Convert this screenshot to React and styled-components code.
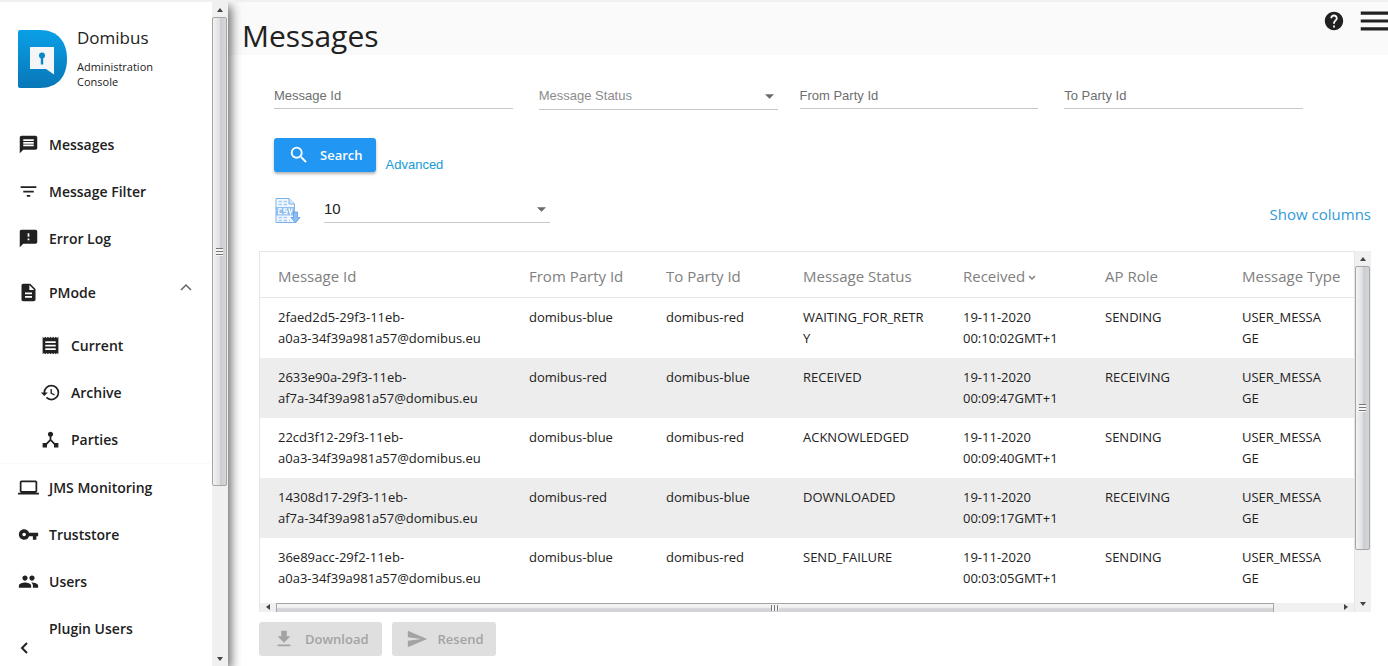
import React from "react";
import styled, { createGlobalStyle } from "styled-components";
import {
  MdComputer,
  MdDescription,
  MdDeviceHub,
  MdFeedback,
  MdFileDownload,
  MdFilterList,
  MdHelp,
  MdHistory,
  MdMenu,
  MdMessage,
  MdPeople,
  MdReceipt,
  MdSearch,
  MdSend,
  MdVpnKey,
} from "react-icons/md";

const mainLinks = [
  { label: "Messages", icon: MdMessage },
  { label: "Message Filter", icon: MdFilterList },
  { label: "Error Log", icon: MdFeedback },
];

const pmodeLinks = [
  { label: "Current", icon: MdReceipt },
  { label: "Archive", icon: MdHistory },
  { label: "Parties", icon: MdDeviceHub },
];

const adminLinks = [
  { label: "JMS Monitoring", icon: MdComputer },
  { label: "Truststore", icon: MdVpnKey },
  { label: "Users", icon: MdPeople },
  { label: "Plugin Users" },
];

const columns = [
  { title: "Message Id", width: 251 },
  { title: "From Party Id", width: 137 },
  { title: "To Party Id", width: 137 },
  { title: "Message Status", width: 160 },
  { title: "Received", width: 142, sorted: true },
  { title: "AP Role", width: 137 },
  { title: "Message Type", width: 130 },
];

const messages = [
  ["2faed2d5-29f3-11eb-a0a3-34f39a981a57@domibus.eu", "domibus-blue", "domibus-red", "WAITING_FOR_RETRY", "19-11-2020 00:10:02GMT+1", "SENDING", "USER_MESSAGE"],
  ["2633e90a-29f3-11eb-af7a-34f39a981a57@domibus.eu", "domibus-red", "domibus-blue", "RECEIVED", "19-11-2020 00:09:47GMT+1", "RECEIVING", "USER_MESSAGE"],
  ["22cd3f12-29f3-11eb-a0a3-34f39a981a57@domibus.eu", "domibus-blue", "domibus-red", "ACKNOWLEDGED", "19-11-2020 00:09:40GMT+1", "SENDING", "USER_MESSAGE"],
  ["14308d17-29f3-11eb-af7a-34f39a981a57@domibus.eu", "domibus-red", "domibus-blue", "DOWNLOADED", "19-11-2020 00:09:17GMT+1", "RECEIVING", "USER_MESSAGE"],
  ["36e89acc-29f2-11eb-a0a3-34f39a981a57@domibus.eu", "domibus-blue", "domibus-red", "SEND_FAILURE", "19-11-2020 00:03:05GMT+1", "SENDING", "USER_MESSAGE"],
];

const Logo = () => (
  <svg width="50" height="58" viewBox="0 0 50 58" aria-hidden="true">
    <defs>
      <linearGradient id="logoBlue" x1="0" y1="0" x2="0" y2="1">
        <stop offset="0" stopColor="#0a9fe6" />
        <stop offset="1" stopColor="#0877b8" />
      </linearGradient>
    </defs>
    <path
      d="M2 0H22C40 0 49 12 49 29S40 58 22 58H2Q0 58 0 56V2Q0 0 2 0Z"
      fill="url(#logoBlue)"
    />
    <path d="M12 17H36V44.500L28 39H12Z" fill="#f3f5f7" />
    <circle cx="24" cy="25.500" r="3" fill="#0b86c8" />
    <path d="M22.800 26H25.200V34.500H22.800Z" fill="#0b86c8" />
  </svg>
);

const CsvIcon = () => (
  <svg width="26" height="26" viewBox="0 0 26 26" fill="none" aria-hidden="true">
    <path d="M1 .5H14L19.500 6V24.500H1Z" fill="#f2f8ff" stroke="#7fb0e4" />
    <path d="M14 .5V6H19.500" fill="#d5e8fb" stroke="#7fb0e4" />
    <path
      d="M3.500 3.500H7M8.500 3.500H12M3.500 6.500H7M8.500 6.500H12M3.500 19.500H7M8.500 19.500H12M3.500 22.500H7M8.500 22.500H12M14 22.500H15"
      stroke="#a9cdf2"
      strokeWidth="1.500"
    />
    <rect x="1" y="9" width="18.500" height="8.500" fill="#8fbff0" />
    <path
      d="M7 10.800H3.800V15.700H7M12 10.800H9V13.200H12V15.700H8.800M13.800 10.300L15.500 15.700L17.200 10.300"
      stroke="#fff"
      strokeWidth="1.200"
    />
    <path
      d="M18.500 14H22.500V19.500H25L20.500 25L16 19.500H18.500Z"
      fill="#8cc0f5"
      stroke="#5c9be0"
      strokeWidth=".8"
    />
  </svg>
);

const Chevron = ({ points, width, height, stroke }) => (
  <svg
    width={width}
    height={height}
    viewBox={`0 0 ${width} ${height}`}
    fill="none"
    stroke="currentColor"
    strokeWidth={stroke}
    aria-hidden="true"
  >
    <polyline points={points} />
  </svg>
);

const Triangle = ({ direction }) => {
  const shapes = {
    up: "1,6 4,2 7,6",
    down: "1,2 7,2 4,6",
    left: "6,1 2,4 6,7",
    right: "2,1 6,4 2,7",
  };
  return (
    <svg width="8" height="8" viewBox="0 0 8 8" fill="#444" aria-hidden="true">
      <polygon points={shapes[direction]} />
    </svg>
  );
};

const VerticalScrollbar = ({ thumb }) => (
  <VerticalTrack>
    <ArrowBox>
      <Triangle direction="up" />
    </ArrowBox>
    <ThumbLane>
      <VerticalThumb style={{ height: `${thumb}%` }}>
        <Grip />
      </VerticalThumb>
    </ThumbLane>
    <ArrowBox>
      <Triangle direction="down" />
    </ArrowBox>
  </VerticalTrack>
);

const NavItem = ({ label, icon: Icon, nested }) => (
  <NavLink href="#" $nested={nested}>
    <NavIcon>{Icon && <Icon />}</NavIcon>
    {label}
  </NavLink>
);

const SelectField = ({ children, ...rest }) => (
  <SelectWrap>
    <Select {...rest}>{children}</Select>
    <SelectArrow viewBox="0 0 10 5" aria-hidden="true">
      <polygon points="0,0 10,0 5,5" />
    </SelectArrow>
  </SelectWrap>
);

// the last two groups of an id stay together on one line
const MessageId = ({ value }) => {
  const parts = value.split("-");
  return (
    <>
      {parts.slice(0, 3).join("-")}-<wbr />
      <NoWrap>{parts.slice(3).join("-")}</NoWrap>
    </>
  );
};

const App = () => {
  return (
    <>
      <GlobalStyle />
      <Page>
        <Sidebar>
          <SidebarContent>
            <Brand>
              <Logo />
              <div>
                <BrandName>Domibus</BrandName>
                <BrandText>Administration Console</BrandText>
              </div>
            </Brand>
            <nav>
              {mainLinks.map((link) => (
                <NavItem key={link.label} {...link} />
              ))}
              <NavToggle type="button" aria-expanded="true">
                <NavIcon>
                  <MdDescription />
                </NavIcon>
                PMode
                <Chevron points="1,7 6,2 11,7" width={12} height={8} stroke={1.5} />
              </NavToggle>
              <SubMenu>
                {pmodeLinks.map((link) => (
                  <NavItem key={link.label} {...link} nested />
                ))}
              </SubMenu>
              {adminLinks.map((link) => (
                <NavItem key={link.label} {...link} />
              ))}
            </nav>
            <CollapseButton type="button" aria-label="Collapse menu">
              <Chevron points="7,1 2,6 7,11" width={8} height={12} stroke={2} />
            </CollapseButton>
          </SidebarContent>
          <VerticalScrollbar thumb={74} />
        </Sidebar>

        <Main>
          <Header>
            <Title>Messages</Title>
            <HeaderActions>
              <IconButton type="button" aria-label="Help">
                <MdHelp size={22} />
              </IconButton>
              <IconButton type="button" aria-label="Menu">
                <MdMenu size={38} />
              </IconButton>
            </HeaderActions>
          </Header>

          <Filters>
            <FilterPair>
              <Input aria-label="Message Id" placeholder="Message Id" />
              <SelectField aria-label="Message Status" defaultValue="">
                <option value="">Message Status</option>
              </SelectField>
            </FilterPair>
            <FilterPair>
              <Input aria-label="From Party Id" placeholder="From Party Id" />
              <Input aria-label="To Party Id" placeholder="To Party Id" />
            </FilterPair>
          </Filters>

          <SearchRow>
            <Button type="button" $primary>
              <MdSearch size={22} />
              Search
            </Button>
            <AdvancedLink href="#">Advanced</AdvancedLink>
          </SearchRow>

          <Toolbar>
            <IconButton type="button" aria-label="Export as CSV">
              <CsvIcon />
            </IconButton>
            <PageSize>
              <SelectField aria-label="Rows per page" defaultValue="10" $dark>
                <option value="10">10</option>
              </SelectField>
            </PageSize>
            <ColumnsLink href="#">Show columns</ColumnsLink>
          </Toolbar>

          <Grid>
            <GridBody>
              <Table>
                <colgroup>
                  {columns.map((column) => (
                    <col key={column.title} style={{ width: column.width }} />
                  ))}
                </colgroup>
                <thead>
                  <tr>
                    {columns.map((column) => (
                      <HeadCell key={column.title} scope="col">
                        {column.title}
                        {column.sorted && (
                          <Chevron points="1,2 4,5 7,2" width={8} height={7} stroke={1.5} />
                        )}
                      </HeadCell>
                    ))}
                  </tr>
                </thead>
                <tbody>
                  {messages.map(([id, ...values]) => (
                    <Row key={id}>
                      <Cell>
                        <MessageId value={id} />
                      </Cell>
                      {values.map((value, index) => (
                        <Cell key={index}>{value}</Cell>
                      ))}
                    </Row>
                  ))}
                </tbody>
              </Table>
              <HorizontalTrack>
                <Triangle direction="left" />
                <HorizontalLane>
                  <HorizontalThumb>
                    <Grip $upright />
                  </HorizontalThumb>
                </HorizontalLane>
                <Triangle direction="right" />
              </HorizontalTrack>
            </GridBody>
            <VerticalScrollbar thumb={86} />
          </Grid>

          <Actions>
            <Button type="button" disabled>
              <MdFileDownload size={22} />
              Download
            </Button>
            <Button type="button" disabled>
              <MdSend size={22} />
              Resend
            </Button>
          </Actions>
        </Main>
      </Page>
    </>
  );
};

const GlobalStyle = createGlobalStyle`
  * {
    box-sizing: border-box;
  }

  body {
    margin: 0;
    background: #fff;
    color: #212121;
    font-family: "Open Sans", "Noto Sans", sans-serif;
  }

  button, input, select {
    font-family: inherit;
  }
`;

const Page = styled.div`
  display: flex;
  height: 100vh;
  overflow: hidden;
  border-top: 2px solid #f0f0f0;
`;

const Sidebar = styled.aside`
  display: flex;
  flex-shrink: 0;
  width: 228px;
  background: #fff;
  box-shadow: 3px 4px 10px rgba(0, 0, 0, 0.6);
  z-index: 1;
`;

const SidebarContent = styled.div`
  position: relative;
  flex: 1;
  overflow: hidden;
`;

const Brand = styled.div`
  display: flex;
  gap: 9px;
  height: 119px;
  padding: 28px 40px 0 18px;

  svg {
    flex-shrink: 0;
  }
`;

const BrandName = styled.div`
  margin-top: -4px;
  font-size: 17px;
  font-weight: 500;
  line-height: 24px;
`;

const BrandText = styled.div`
  margin-top: 9px;
  font-size: 11px;
  line-height: 15px;
`;

const NavLink = styled.a`
  display: flex;
  align-items: center;
  height: 47px;
  padding-left: ${({ $nested }) => ($nested ? "40px" : "18px")};
  color: inherit;
  font-size: 14px;
  font-weight: 600;
  text-decoration: none;
`;

const NavToggle = styled.button`
  display: flex;
  align-items: center;
  width: 100%;
  height: 60px;
  padding: 0 20px 0 18px;
  border: 0;
  background: none;
  color: inherit;
  font-size: 14px;
  font-weight: 600;

  > svg {
    margin: 0 0 10px auto;
    color: #666;
  }
`;

const NavIcon = styled.span`
  display: flex;
  width: 31px;
  font-size: 21px;
`;

const SubMenu = styled.div`
  border-bottom: 1px solid #fafafa;
`;

const CollapseButton = styled.button`
  position: absolute;
  bottom: 8px;
  left: 16px;
  display: flex;
  padding: 4px;
  border: 0;
  background: none;
  color: #212121;
`;

const VerticalTrack = styled.div`
  display: flex;
  flex-direction: column;
  flex-shrink: 0;
  width: 16px;
  padding-right: 1px;
  background: #f0f0f0;
`;

const ArrowBox = styled.div`
  display: flex;
  align-items: center;
  justify-content: center;
  height: 15px;
`;

const ThumbLane = styled.div`
  flex: 1;
`;

const VerticalThumb = styled.div`
  display: flex;
  align-items: center;
  justify-content: center;
  border: 1px solid #a5a5a5;
  border-radius: 2px;
  background: linear-gradient(to right, #f3f3f3, #dedfe1 50%, #cbccd0 55%, #d6d7da);
`;

const Grip = styled.span`
  width: ${({ $upright }) => ($upright ? "8px" : "7px")};
  height: ${({ $upright }) => ($upright ? "6px" : "8px")};
  background: repeating-linear-gradient(
    ${({ $upright }) => ($upright ? "to right" : "to bottom")},
    #777 0 1px,
    #f5f5f5 1px 3px
  );
`;

const Main = styled.main`
  flex: 1;
  min-width: 0;
`;

const Header = styled.header`
  display: flex;
  justify-content: space-between;
  height: 53px;
  padding-left: 14px;
  overflow: hidden;
  background: #fafafa;
`;

const Title = styled.h1`
  margin: 0;
  font-size: 30px;
  font-weight: 400;
  line-height: 68px;
`;

const HeaderActions = styled.div`
  display: flex;
  align-items: center;
  gap: 11px;
  height: 38px;
  margin-right: -6px;
`;

const IconButton = styled.button`
  display: flex;
  flex-shrink: 0;
  padding: 0;
  border: 0;
  background: none;
  color: #212121;
`;

const Filters = styled.div`
  display: grid;
  grid-template-columns: 1fr 1fr;
  gap: 22px;
  padding: 27px 85px 0 46px;
`;

const FilterPair = styled.div`
  display: grid;
  grid-template-columns: 1fr 1fr;
  gap: 26px;
`;

const Input = styled.input`
  width: 100%;
  min-width: 0;
  height: 27px;
  padding: 0;
  border: 0;
  border-bottom: 1px solid #c8c8c8;
  background: none;
  font-family: "Liberation Sans", Arial, sans-serif;
  font-size: 13px;

  &::placeholder {
    color: #6e6e6e;
  }
`;

const SelectWrap = styled.div`
  position: relative;
`;

const Select = styled.select`
  width: 100%;
  height: 28px;
  padding: 0 24px 1px 0;
  border: 0;
  border-bottom: 1px solid #c8c8c8;
  border-radius: 0;
  background: none;
  appearance: none;
  color: ${({ $dark }) => ($dark ? "#212121" : "#8c8c8c")};
  font-family: "Liberation Sans", Arial, sans-serif;
  font-size: ${({ $dark }) => ($dark ? "15px" : "13px")};
`;

const SelectArrow = styled.svg`
  position: absolute;
  top: 12px;
  right: 4px;
  width: 9px;
  height: 5px;
  fill: #6a6a6a;
  pointer-events: none;
`;

const SearchRow = styled.div`
  display: flex;
  align-items: flex-end;
  gap: 10px;
  padding: 28px 0 0 46px;
`;

const Button = styled.button`
  display: flex;
  align-items: center;
  gap: 10px;
  height: 34px;
  padding: 0 13px 0 14px;
  border: 0;
  border-radius: 3px;
  background: ${({ $primary }) => ($primary ? "#2196f3" : "#dfdfdf")};
  box-shadow: ${({ $primary }) =>
    $primary ? "0 2px 3px rgba(0, 0, 0, 0.3)" : "none"};
  color: ${({ $primary }) => ($primary ? "#fff" : "#a3a3a3")};
  font-size: 13px;
  font-weight: 600;
`;

const AdvancedLink = styled.a`
  color: #149bd7;
  font-family: "Liberation Sans", Arial, sans-serif;
  font-size: 13px;
  line-height: 15px;
  text-decoration: none;
`;

const Toolbar = styled.div`
  display: flex;
  align-items: flex-end;
  padding: 23px 17px 0 47px;
`;

const PageSize = styled.div`
  flex: 0 1 226px;
  margin: 0 0 1px 23px;
`;

const ColumnsLink = styled.a`
  margin-left: auto;
  color: #3399d6;
  font-size: 15px;
  line-height: 20px;
  text-decoration: none;
`;

const Grid = styled.div`
  display: flex;
  margin: 27px 17px 0 31px;
`;

const GridBody = styled.div`
  flex: 1;
  min-width: 0;
  border: 1px solid #e6e6e6;
  border-bottom: 0;
`;

const Table = styled.table`
  width: 100%;
  margin-bottom: 5px;
  border-collapse: collapse;
  table-layout: fixed;
`;

const HeadCell = styled.th`
  height: 45px;
  padding: 4px 10px 0 18px;
  border-bottom: 1px solid #e6e6e6;
  color: #808080;
  font-size: 15px;
  font-weight: 400;
  text-align: left;
  white-space: nowrap;

  svg {
    margin-left: 3px;
    vertical-align: 1px;
  }
`;

const Row = styled.tr`
  &:nth-child(even) {
    background: #ededed;
  }
`;

const Cell = styled.td`
  height: 60px;
  padding: 9px 18px;
  font-size: 13px;
  line-height: 21px;
  vertical-align: top;
  overflow-wrap: anywhere;

  &:last-child {
    padding-right: 30px;
  }
`;

const NoWrap = styled.span`
  white-space: nowrap;
`;

const HorizontalTrack = styled.div`
  display: flex;
  align-items: center;
  gap: 4px;
  height: 9px;
  padding: 0 4px;
  background: #f0f0f0;
`;

const HorizontalLane = styled.div`
  flex: 1;
  height: 100%;
`;

const HorizontalThumb = styled.div`
  display: flex;
  align-items: center;
  justify-content: center;
  width: 94%;
  height: 100%;
  border: 1px solid #a5a5a5;
  border-bottom: 0;
  background: linear-gradient(#f3f3f3 40%, #d3d4d7 60%);
`;

const Actions = styled.div`
  display: flex;
  gap: 10px;
  padding: 10px 31px;
`;

export default App;
